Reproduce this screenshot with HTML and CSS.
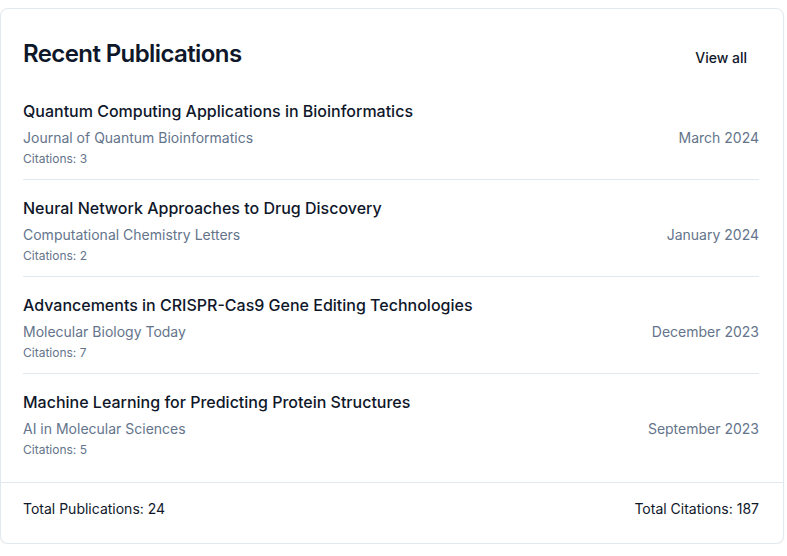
FILE: index.html
```html
<!DOCTYPE html>
<html lang="en">
<head>
<meta charset="utf-8">
<title>Recent Publications</title>
<link rel="stylesheet" href="styles.css">
</head>
<body>
<section class="card">
  <header class="card-header">
    <h2 class="card-title">Recent Publications</h2>
    <button class="view-all" type="button">View all</button>
  </header>
  <ul class="pub-list">
    <li class="pub">
      <h3 class="pub-title">Quantum Computing Applications in Bioinformatics</h3>
      <div class="pub-meta">
        <span class="pub-journal">Journal of Quantum Bioinformatics</span>
        <span class="pub-date">March 2024</span>
      </div>
      <p class="pub-cites">Citations: 3</p>
    </li>
    <li class="pub">
      <h3 class="pub-title">Neural Network Approaches to Drug Discovery</h3>
      <div class="pub-meta">
        <span class="pub-journal">Computational Chemistry Letters</span>
        <span class="pub-date">January 2024</span>
      </div>
      <p class="pub-cites">Citations: 2</p>
    </li>
    <li class="pub">
      <h3 class="pub-title">Advancements in CRISPR-Cas9 Gene Editing Technologies</h3>
      <div class="pub-meta">
        <span class="pub-journal">Molecular Biology Today</span>
        <span class="pub-date">December 2023</span>
      </div>
      <p class="pub-cites">Citations: 7</p>
    </li>
    <li class="pub">
      <h3 class="pub-title">Machine Learning for Predicting Protein Structures</h3>
      <div class="pub-meta">
        <span class="pub-journal">AI in Molecular Sciences</span>
        <span class="pub-date">September 2023</span>
      </div>
      <p class="pub-cites">Citations: 5</p>
    </li>
  </ul>
  <footer class="card-footer">
    <span>Total Publications: 24</span>
    <span>Total Citations: 187</span>
  </footer>
</section>
</body>
</html>
```
FILE: styles.css
```css
* { box-sizing: border-box; }
html, body { background: #ffffff; }
body {
  margin: 8px 0 0 0;
  font-family: Inter, "Noto Sans", sans-serif;
  color: #0f172a;
}
.card {
  width: 784px;
  border: 1px solid #e2e8f0;
  border-radius: 8px;
  background: #fff;
  box-shadow: 0 1px 2px rgba(15, 23, 42, 0.05);
  padding: 24px 0 24px 0;
}
.card-header {
  display: flex;
  align-items: center;
  justify-content: space-between;
  padding: 0 24px 0 22px;
  height: 40px;
  margin-bottom: 10px;
}
.card-title {
  margin: 1px 0 0 0;
  font-size: 24px;
  line-height: 32px;
  font-weight: 600;
  letter-spacing: -0.6px;
}
.view-all {
  font-family: inherit;
  font-size: 14px;
  font-weight: 500;
  color: #0f172a;
  background: transparent;
  border: 0;
  padding: 8px 12px;
  height: 36px;
  border-radius: 6px;
  margin-top: 8px;
}
.pub-list {
  list-style: none;
  margin: 0 24px 0 22px;
  padding: 0;
}
.pub {
  padding: 16px 0 12px;
  border-bottom: 1px solid #e2e8f0;
}
.pub:last-child { border-bottom: 0; }
.pub-title {
  margin: 0;
  font-size: 16px;
  line-height: 24px;
  font-weight: 500;
}
.pub-meta {
  display: flex;
  justify-content: space-between;
  align-items: center;
  font-size: 14px;
  line-height: 20px;
  color: #64748b;
  margin-top: 5px;
}
.pub-cites {
  margin: 3px 0 0 0;
  font-size: 12px;
  line-height: 16px;
  color: #64748b;
}
.card-footer {
  display: flex;
  justify-content: space-between;
  border-top: 1px solid #e2e8f0;
  margin-top: 12px;
  padding: 16px 24px 0 22px;
  font-size: 14px;
  line-height: 20px;
}
```
